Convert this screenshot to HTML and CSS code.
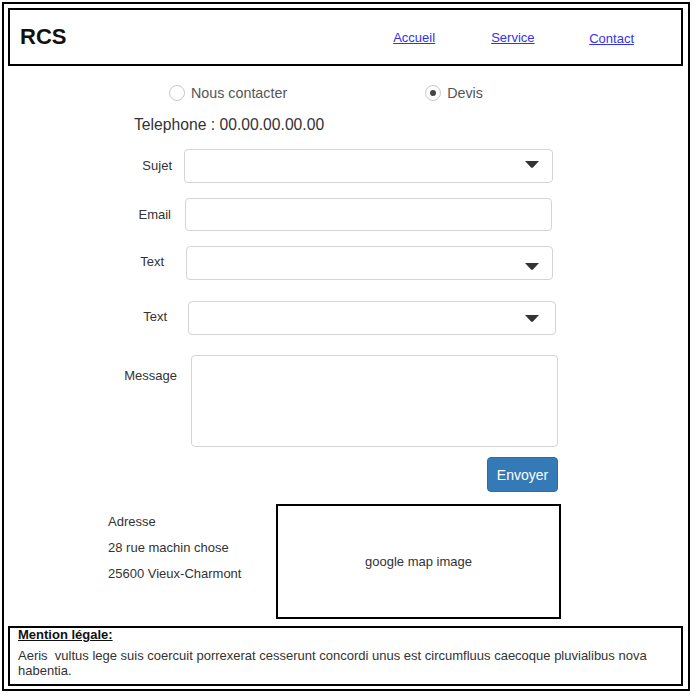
FILE: index.html
```html
<!DOCTYPE html>
<html lang="fr">
<head>
<meta charset="utf-8">
<title>RCS - Contact</title>
<link rel="stylesheet" href="styles.css">
</head>
<body>
<div class="frame">
  <header class="header">
    <div class="logo">RCS</div>
    <nav class="nav">
      <a href="#" class="nav-link">Accueil</a>
      <a href="#" class="nav-link">Service</a>
      <a href="#" class="nav-link nav-link-last">Contact</a>
    </nav>
  </header>

  <main class="main">
    <div class="radios">
      <label class="radio"><span class="radio-circle"></span><span>Nous contacter</span></label>
      <label class="radio"><span class="radio-circle checked"></span><span>Devis</span></label>
    </div>

    <div class="phone">Telephone : 00.00.00.00.00</div>

    <div class="row row-1">
      <div class="lbl">Sujet</div>
      <div class="field select">
        <svg class="arrow" width="14" height="7" viewBox="0 0 14 7"><path d="M0 0H14L8 6.4Q7 7.2 6 6.4Z" fill="#333"/></svg>
      </div>
    </div>

    <div class="row row-2">
      <div class="lbl">Email</div>
      <div class="field"></div>
    </div>

    <div class="row row-3">
      <div class="lbl">Text</div>
      <div class="field select">
        <svg class="arrow" width="14" height="7" viewBox="0 0 14 7"><path d="M0 0H14L8 6.4Q7 7.2 6 6.4Z" fill="#333"/></svg>
      </div>
    </div>

    <div class="row row-4">
      <div class="lbl">Text</div>
      <div class="field select">
        <svg class="arrow" width="14" height="7" viewBox="0 0 14 7"><path d="M0 0H14L8 6.4Q7 7.2 6 6.4Z" fill="#333"/></svg>
      </div>
    </div>

    <div class="row row-5">
      <div class="lbl">Message</div>
      <div class="field textarea"></div>
    </div>

    <button class="btn" type="button">Envoyer</button>

    <section class="contact">
      <div class="address">
        <div>Adresse</div>
        <div>28 rue machin chose</div>
        <div>25600 Vieux-Charmont</div>
      </div>
      <div class="map">google map image</div>
    </section>
  </main>

  <footer class="footer">
    <div class="legal-title">Mention légale:</div>
    <p class="legal-text">Aeris&nbsp; vultus lege suis coercuit porrexerat cesserunt concordi unus est circumfluus caecoque pluvialibus nova habentia.</p>
  </footer>
</div>
</body>
</html>
```

FILE: styles.css
```css
* { box-sizing: border-box; }

html, body {
  margin: 0;
  padding: 0;
  background: #fff;
}

body {
  font-family: "Liberation Sans", Arial, sans-serif;
  color: #333;
}

.frame {
  margin: 2px 0 0 2px;
  width: 688px;
  border: 2px solid #000;
  display: flex;
  flex-direction: column;
}

/* Header */
.header {
  margin: 4px 0 0 4px;
  width: 675px;
  height: 58px;
  border: 2px solid #000;
  display: flex;
  align-items: center;
  padding-left: 10px;
}

.logo {
  font-size: 22px;
  font-weight: bold;
  color: #111;
}

.nav {
  margin-left: auto;
  margin-right: 47px;
  display: flex;
  align-items: center;
}

.nav-link {
  width: 98px;
  font-size: 13px;
  color: #3333ee;
  text-decoration: underline;
}

.nav-link-last {
  width: auto;
  margin-top: 3px;
}

/* Main */
.main {
  display: flex;
  flex-direction: column;
  align-items: flex-start;
}

.radios {
  margin: 17px 0 0 165px;
  height: 20px;
  display: flex;
  align-items: center;
  gap: 138px;
}

.radio {
  display: flex;
  align-items: center;
  gap: 6px;
  font-size: 14.3px;
  color: #555;
}

.radio-circle {
  width: 16px;
  height: 16px;
  border: 1px solid #c8c8c8;
  border-radius: 50%;
  display: flex;
  align-items: center;
  justify-content: center;
}

.radio-circle.checked::after {
  content: "";
  width: 6px;
  height: 6px;
  border-radius: 50%;
  background: #444;
}

.phone {
  margin: 13px 0 0 130px;
  font-size: 15.7px;
  line-height: 18px;
  color: #333;
}

/* Form rows */
.row {
  margin-left: 96px;
  display: flex;
  align-items: center;
}

.lbl {
  font-size: 13px;
  line-height: 16px;
  text-align: right;
  color: #333;
}

.field {
  height: 34px;
  border: 1px solid #d4d4d4;
  border-radius: 4px;
  background: #fff;
}

.select {
  display: flex;
  align-items: center;
  justify-content: flex-end;
  padding-right: 13px;
}

.arrow { display: block; }

.row-1 { margin-top: 15px; }
.row-1 .lbl { width: 72px; }
.row-1 .field { margin-left: 12px; width: 369px; padding-bottom: 4px; }

.row-2 { margin-top: 15px; }
.row-2 .lbl { width: 71px; }
.row-2 .field { margin-left: 14px; width: 367px; height: 33px; }

.row-3 { margin-top: 15px; }
.row-3 .lbl { width: 64px; margin-top: -2px; }
.row-3 .field { margin-left: 22px; width: 367px; padding-top: 7px; }

.row-4 { margin-top: 21px; }
.row-4 .lbl { width: 67px; margin-top: -2px; }
.row-4 .field { margin-left: 21px; width: 368px; padding-right: 16px; padding-top: 1px; }

.row-5 { margin-top: 20px; align-items: flex-start; }
.row-5 .lbl { width: 77px; padding-top: 13px; }
.row-5 .field { margin-left: 14px; width: 367px; height: 92px; }

.btn {
  margin: 10px 0 0 483px;
  width: 71px;
  height: 35px;
  padding: 0;
  background: #337ab7;
  border: 1px solid #2e6da4;
  border-radius: 4px;
  color: #fff;
  font-family: "Liberation Sans", Arial, sans-serif;
  font-size: 14px;
}

/* Address & map */
.contact {
  margin-top: 12px;
  display: flex;
  align-items: flex-start;
}

.address {
  margin-left: 104px;
  width: 168px;
  padding-top: 5px;
  font-size: 13px;
  line-height: 26px;
  color: #333;
}

.map {
  width: 285px;
  height: 115px;
  border: 2px solid #000;
  display: flex;
  align-items: center;
  justify-content: center;
  font-size: 13px;
  color: #333;
}

/* Footer */
.footer {
  margin: 7px 0 3px 4px;
  width: 675px;
  height: 60px;
  border: 2px solid #000;
  padding: 0 8px 0 8px;
}

.legal-title {
  font-size: 13px;
  line-height: 14px;
  font-weight: bold;
  text-decoration: underline;
  color: #111;
}

.legal-text {
  margin: 6px 0 0 0;
  font-size: 13px;
  line-height: 15px;
  color: #333;
}
```
